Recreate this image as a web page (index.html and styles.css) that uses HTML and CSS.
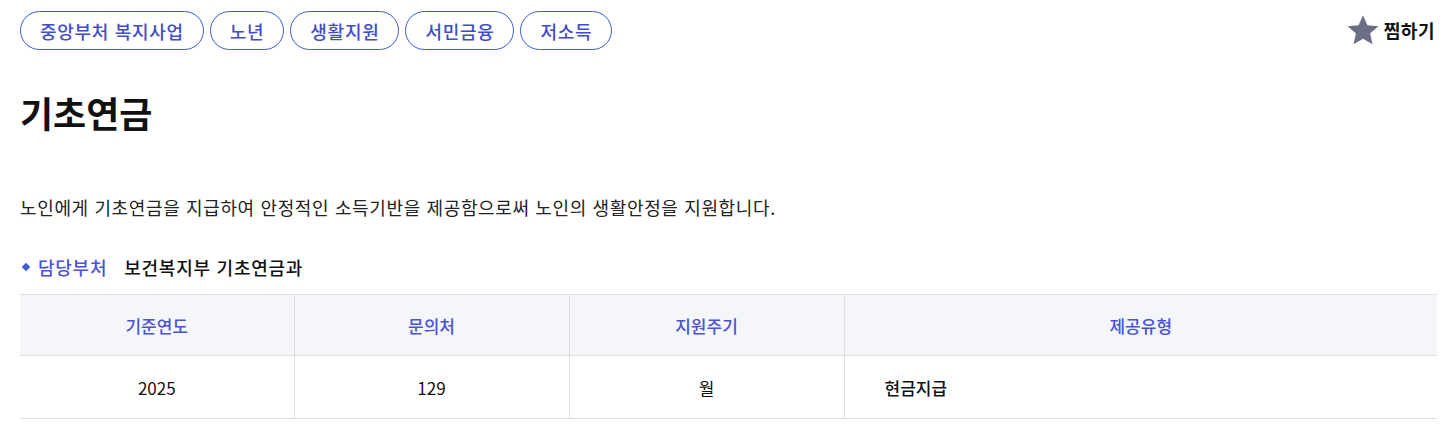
FILE: index.html
```html
<!DOCTYPE html>
<html lang="ko">
<head>
<meta charset="utf-8">
<link rel="stylesheet" href="styles.css">
</head>
<body>
<div class="page">
  <div class="top">
    <ul class="tags">
      <li class="tag">중앙부처 복지사업</li>
      <li class="tag">노년</li>
      <li class="tag">생활지원</li>
      <li class="tag">서민금융</li>
      <li class="tag">저소득</li>
    </ul>
    <button class="fav">
      <svg class="star" viewBox="0 0 24 24" width="34" height="34"><path d="M12 1.6l3.1 7.1 7.7.7-5.8 5.1 1.7 7.6L12 18.1l-6.7 4 1.7-7.6-5.8-5.1 7.7-.7z" fill="#6b6e84"/></svg>
      <span>찜하기</span>
    </button>
  </div>
  <h1 class="title">기초연금</h1>
  <p class="desc">노인에게 기초연금을 지급하여 안정적인 소득기반을 제공함으로써 노인의 생활안정을 지원합니다.</p>
  <div class="dept">
    <span class="dot"></span>
    <span class="dept-label">담당부처</span>
    <span class="dept-value">보건복지부 기초연금과</span>
  </div>
  <table class="info">
    <colgroup>
      <col class="c1"><col class="c2"><col class="c3"><col class="c4">
    </colgroup>
    <thead>
      <tr><th>기준연도</th><th>문의처</th><th>지원주기</th><th>제공유형</th></tr>
    </thead>
    <tbody>
      <tr><td>2025</td><td>129</td><td>월</td><td class="left">현금지급</td></tr>
    </tbody>
  </table>
</div>
</body>
</html>
```
FILE: styles.css
```css
* { box-sizing: border-box; }
html, body { margin: 0; padding: 0; background: #fff; }
body {
  font-family: "Noto Sans CJK KR", "Noto Sans", sans-serif;
  color: #111;
}
.page { padding: 11px 12px 0 20px; }
.top { display: flex; justify-content: space-between; align-items: flex-start; }
.tags { list-style: none; margin: 0; padding: 0; display: flex; gap: 6px; }
.tag {
  height: 39px;
  padding: 0 19px;
  border: 1px solid #3d5bd6;
  border-radius: 20px;
  color: #3f4dc9;
  font-size: 18px;
  font-weight: 500;
  display: flex;
  align-items: center;
  letter-spacing: 0.7px;
}
.fav {
  margin-top: 2px;
  background: none;
  border: 0;
  padding: 0;
  display: flex;
  align-items: center;
  gap: 4px;
  font-family: inherit;
  font-size: 18px;
  font-weight: 700;
  letter-spacing: 0.5px;
  color: #111;
}
.title {
  margin: 36px 0 0;
  font-size: 36px;
  font-weight: 700;
  line-height: 52px;
  letter-spacing: 0;
}
.desc {
  margin: 56px 0 0;
  font-size: 18px;
  line-height: 26px;
  color: #222;
  letter-spacing: 0.63px;
}
.dept { display: flex; align-items: center; margin-top: 35px; height: 24px; font-size: 18px; font-weight: 500; letter-spacing: 0.75px; }
.dot { width: 6px; height: 6px; background: #3d5bd6; transform: rotate(45deg); margin: 0 9px 0 3px; }
.dept-label { color: #4b52d6; margin-right: 17px; }
.dept-value { color: #111; }
.info {
  margin-top: 15px;
  width: 1417px;
  border-collapse: collapse;
  font-size: 17px;
  table-layout: fixed;
}
.c1 { width: 274px; }
.c2, .c3 { width: 275px; }
.info th, .info td { border: 1px solid #dedede; text-align: center; }
.info tr > :first-child { border-left: 0; }
.info tr > :last-child { border-right: 0; }
.info th {
  background: #f5f6fa;
  height: 61px;
  color: #4b52d6;
  font-weight: 500;
}
.info td { height: 63px; font-weight: 400; color: #111; }
.info td.left { text-align: left; padding-left: 40px; font-weight: 500; }
```
